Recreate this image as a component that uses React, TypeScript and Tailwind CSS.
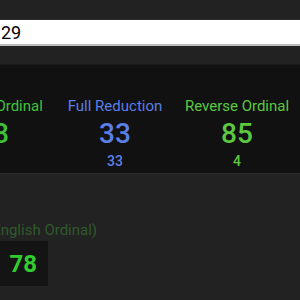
import React from 'react';

const columns = [
    { label: 'English Ordinal', value: 78, sub: '6', tone: 'text-[#3fc23a]' },
    { label: 'Full Reduction', value: 33, sub: '33', tone: 'text-[#5b7fe6]' },
    { label: 'Reverse Ordinal', value: 85, sub: '4', tone: 'text-[#5cc93f]' },
];

export default function App() {
    return (
        <div className="w-[300px] h-[300px] overflow-hidden bg-[#222222] font-['Roboto',sans-serif]">
            {/* TOP BAR */}
            <div className="h-[20px] border-b border-[#2c2c2c]" />

            {/* INPUT */}
            <input
                type="text"
                defaultValue="29"
                className="block w-full h-[26px] bg-white text-black text-[18px] pl-[1px] border-b-2 border-[#bdbdbd] outline-none"
            />
            <div className="h-[19px] border-b border-[#1a1a1a]" />

            {/* CIPHER RESULTS */}
            <div className="h-[109px] bg-[#111111] border-b border-[#2a2a2a] pt-[31px]">
                <div className="-ml-[68px] grid grid-cols-[122px_122px_122px]">
                    {columns.map(col => (
                        <div key={col.label} className="flex flex-col items-center">
                            <span className={`text-[15px] leading-[20px] ${col.tone}`}>{col.label}</span>
                            <span className={`mt-[2px] text-[28px] leading-[32px] font-medium ${col.tone}`}>{col.value}</span>
                            <span className={`mt-[1px] text-[14px] leading-[20px] font-medium ${col.tone}`}>{col.sub}</span>
                        </div>
                    ))}
                </div>
            </div>

            {/* SELECTED CIPHER */}
            <div className="pt-[46px] -ml-[13px]">
                <div className="text-[15px] leading-[20px] text-[#2f5a2b]">(English Ordinal)</div>
                <div className="mt-[1px] w-[61px] h-[45px] bg-[#141414] flex items-center justify-end pr-[11px]">
                    <span className="text-[24px] font-bold text-[#33cc2e]">78</span>
                </div>
            </div>
        </div>
    );
}
